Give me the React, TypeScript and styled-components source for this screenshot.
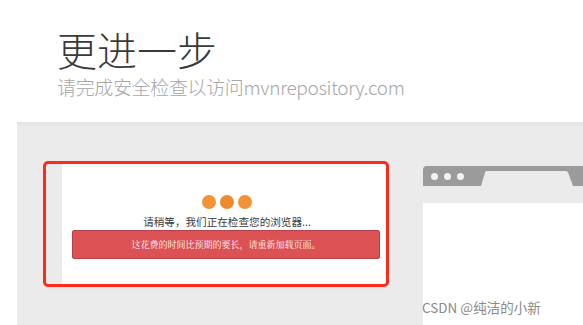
import styled, { createGlobalStyle } from 'styled-components';

const GlobalStyle = createGlobalStyle`
    html, body {
        margin: 0;
        padding: 0;
        background: #ffffff;
        overflow: hidden;
    }
    body {
        font-family: "Noto Sans CJK SC", "Noto Sans", sans-serif;
    }
`;

const Page = styled.div`
    position: relative;
    width: 583px;
    height: 325px;
    display: flex;
    flex-direction: column;
    overflow: hidden;
`;

const Header = styled.div`
    padding: 29px 0 0 57px;
    height: 96px;
    box-sizing: border-box;
`;

const Title = styled.h1`
    margin: 0 0 7px;
    font-size: 40px;
    line-height: 40px;
    font-weight: 300;
    color: #3a3a3a;
`;

const Subtitle = styled.p`
    margin: 0;
    font-size: 19px;
    line-height: 22px;
    font-weight: 300;
    color: #a6a6a6;
    letter-spacing: -0.35px;
`;

const Stage = styled.div`
    flex: 1;
    margin: 26px 0 0 17px;
    background: linear-gradient(180deg, #e4e4e4 0px, #ebebeb 6px, #ebebeb 100%);
    display: flex;
    align-items: flex-start;
    gap: 37px;
    padding: 42px 0 0 45px;
    box-sizing: border-box;
`;

const Card = styled.div`
    position: relative;
    flex: 0 0 324px;
    height: 120px;
    background: #ffffff;
    display: flex;
    flex-direction: column;
    align-items: center;
    padding-top: 31px;
    box-sizing: border-box;
`;

const Highlight = styled.div`
    position: absolute;
    left: -19px;
    top: -3px;
    right: -3px;
    bottom: -3px;
    border: 3px solid #ff2a1a;
    border-radius: 5px;
    pointer-events: none;
`;

const Dots = styled.div`
    display: flex;
    gap: 4px;
    margin-left: 6px;
`;

const Dot = styled.span<{ $color: string }>`
    width: 14px;
    height: 14px;
    border-radius: 50%;
    background: ${(p) => p.$color};
`;

const Waiting = styled.p`
    margin: 6px 0 0 6px;
    font-size: 10.6px;
    line-height: 13px;
    color: #3b3b3b;
`;

const Alert = styled.div`
    align-self: stretch;
    margin: 2px 6px 0 10px;
    height: 29px;
    box-sizing: border-box;
    background: #dc5154;
    border: 1px solid #b7434a;
    border-radius: 2px;
    color: #ffffff;
    font-size: 9px;
    font-family: "Noto Serif CJK SC", "Noto Sans CJK SC", serif;
    display: flex;
    align-items: center;
    justify-content: center;
`;

const Browser = styled.div`
    flex: 1;
    margin-top: 2px;
    display: flex;
    flex-direction: column;
    height: 200px;
`;

const TopBar = styled.div`
    height: 20px;
    background: #9b9b9b;
    border-top-left-radius: 4px;
    display: flex;
    align-items: center;
    padding-left: 8px;
    gap: 6px;
`;

const BarDot = styled.span`
    width: 7px;
    height: 7px;
    border-radius: 50%;
    background: #f2f2f2;
`;

const Tab = styled.svg`
    align-self: flex-end;
    margin-left: 11px;
    display: block;
`;

const Strip = styled.div`
    height: 17px;
    background: #ebebeb;
`;

const Viewport = styled.div`
    flex: 1;
    background: #ffffff;
`;

const Watermark = styled.div`
    position: absolute;
    left: 422px;
    top: 297px;
    font-size: 13.5px;
    line-height: 20px;
    color: #8a8a8a;
    text-shadow: 0 0 2px #ffffff;
`;

export default function App() {
    return (
        <Page>
            <GlobalStyle />
            <Header>
                <Title>更进一步</Title>
                <Subtitle>请完成安全检查以访问mvnrepository.com</Subtitle>
            </Header>
            <Stage>
                <Card>
                    <Highlight />
                    <Dots>
                        <Dot $color="#f39236" />
                        <Dot $color="#ef8a2c" />
                        <Dot $color="#f39236" />
                    </Dots>
                    <Waiting>请稍等，我们正在检查您的浏览器...</Waiting>
                    <Alert>这花费的时间比预期的要长，请重新加载页面。</Alert>
                </Card>
                <Browser>
                    <TopBar>
                        <BarDot />
                        <BarDot />
                        <BarDot />
                        <Tab width="92" height="15" viewBox="0 0 92 15">
                            <path d="M0 15 L4 1.5 Q4.5 0 6 0 L85 0 Q86.5 0 87 1.5 L92 15 Z" fill="#ebebeb" />
                        </Tab>
                    </TopBar>
                    <Strip />
                    <Viewport />
                </Browser>
            </Stage>
            <Watermark>CSDN @纯洁的小新</Watermark>
        </Page>
    );
}
